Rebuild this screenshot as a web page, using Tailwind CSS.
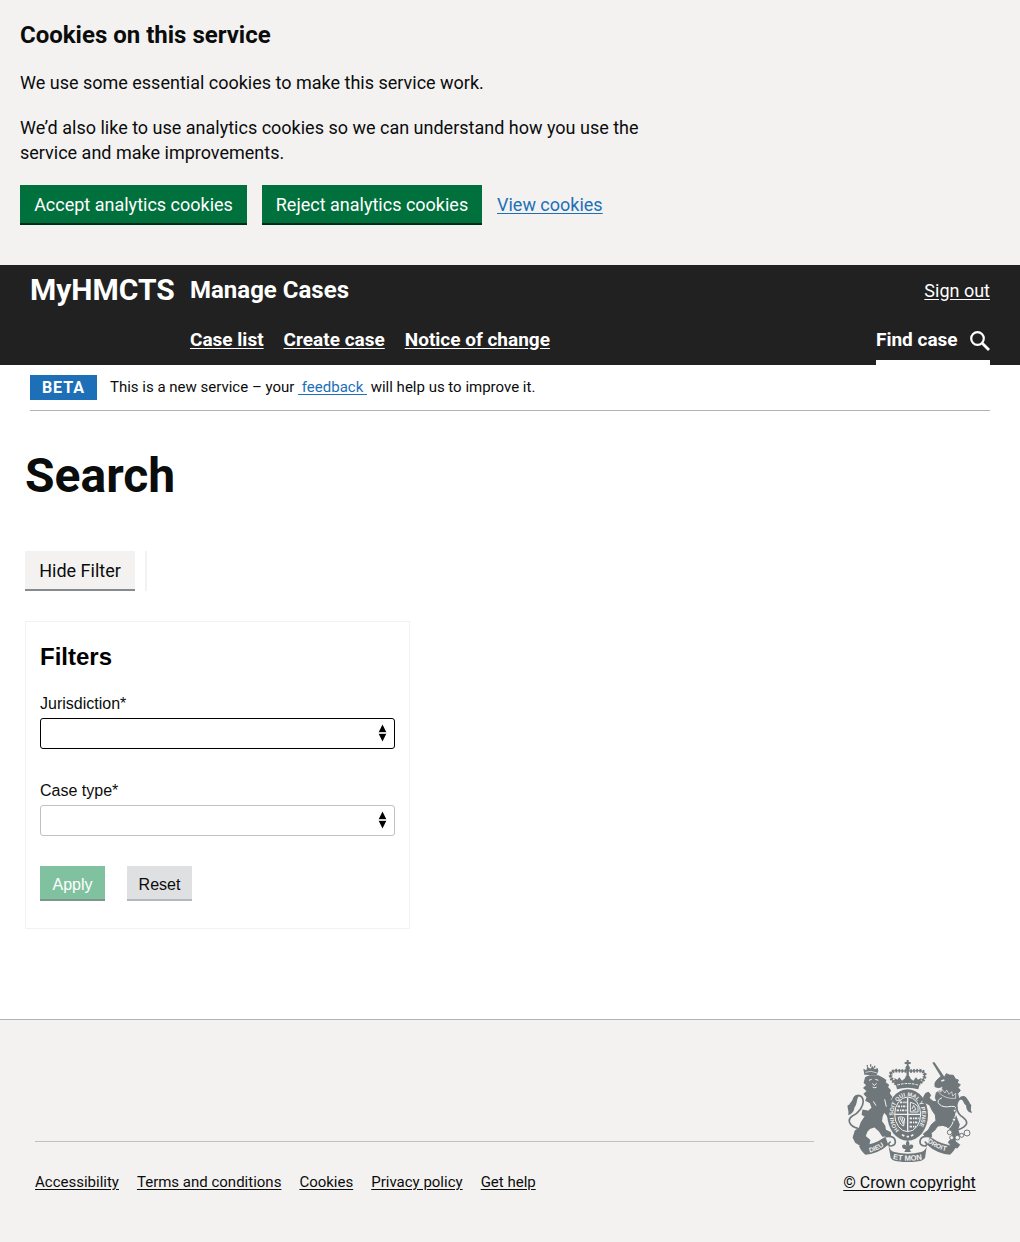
<!DOCTYPE html>
<html lang="en">
<head>
<meta charset="utf-8">
<meta name="viewport" content="width=device-width, initial-scale=1">
<title>Search - Manage Cases</title>
<script src="https://cdn.jsdelivr.net/npm/@tailwindcss/browser@4"></script>
</head>
<body class="flex min-h-screen flex-col bg-white font-['Roboto','Noto_Sans',sans-serif] text-[18px] leading-[25px] text-[#0b0c0c]">

<section aria-label="Cookies on this service" class="bg-[#f3f2f1] px-5 pt-5 pb-10">
  <div class="max-w-[640px]">
    <h2 class="mb-5 text-[24px] leading-[30px] font-bold">Cookies on this service</h2>
    <p class="mb-5">We use some essential cookies to make this service work.</p>
    <p class="mb-5">We’d also like to use analytics cookies so we can understand how you use the service and make improvements.</p>
  </div>
  <div class="flex flex-wrap items-center gap-[15px]">
    <button type="button" class="h-10 w-[227px] border-b-2 border-[#002d18] bg-[#00703c] text-white">Accept analytics cookies</button>
    <button type="button" class="h-10 w-[220px] border-b-2 border-[#002d18] bg-[#00703c] text-white">Reject analytics cookies</button>
    <a href="#" class="pb-[2px] text-[#1d70b8] underline underline-offset-2">View cookies</a>
  </div>
</section>

<header class="bg-[#212121] px-[30px] text-white">
  <div class="flex h-[50px] items-center">
    <a href="#" class="w-40 text-[30px] leading-[30px] font-bold">MyHMCTS</a>
    <a href="#" class="text-[24px] leading-[30px] font-bold">Manage Cases</a>
    <a href="#" class="ml-auto underline underline-offset-2">Sign out</a>
  </div>
  <nav aria-label="Primary" class="flex h-[50px] items-stretch justify-between pl-40 text-[19px] font-bold">
    <ul class="flex items-center gap-5 pb-[2px]">
      <li><a href="#" class="underline underline-offset-2">Case list</a></li>
      <li><a href="#" class="underline underline-offset-2">Create case</a></li>
      <li><a href="#" class="underline underline-offset-2">Notice of change</a></li>
    </ul>
    <a href="#" class="flex w-[114px] items-center justify-between border-b-5 border-white pt-[3px]">Find case
      <svg class="mt-1 size-5" viewBox="0 0 20 20" fill="none" stroke="currentColor" aria-hidden="true"><circle cx="7.5" cy="7.500" r="6.3" stroke-width="2.2"/><path d="M12 12l7 7" stroke-width="2.8"/></svg>
    </a>
  </nav>
</header>

<main class="grow">
  <div class="mx-[30px] flex items-center gap-[13px] border-b border-[#b1b4b6] py-[10px] text-[15px]">
    <strong class="w-[67px] bg-[#1d70b8] text-center text-[16px] tracking-[1px] text-white">BETA</strong>
    <span>This is a new service – your <a href="#" class="whitespace-pre text-[#1d70b8] underline underline-offset-2"> feedback </a> will help us to improve it.</span>
  </div>

  <div class="px-[25px] pt-10 pb-[90px]">
    <h1 class="mb-[50px] text-[48px] leading-[50px] font-bold">Search</h1>
    <div class="mb-[30px] flex gap-[10px]">
      <button type="button" class="h-10 w-[110px] border-b-2 border-[#858b8e] bg-[#f3f2f1]">Hide Filter</button>
      <span class="w-[2px] bg-[#f3f2f1]"></span>
    </div>

    <form class="w-full max-w-[385px] border border-[#f3f2f1] px-[14px] pt-5 pb-[27px] font-['Liberation_Sans',Arial,sans-serif] text-[16px] leading-5">
      <h2 class="mb-5 text-[24px] leading-[30px] font-bold text-black">Filters</h2>
      <label for="jurisdiction" class="mb-1 block pt-[2px]">Jurisdiction*</label>
      <div class="relative mb-[30px]">
        <select id="jurisdiction" class="block h-[31px] w-full appearance-none rounded-[3px] border border-black bg-white px-2"><option></option></select>
        <svg class="pointer-events-none absolute top-[6px] right-2 h-[18px] w-[9px]" viewBox="0 0 9 18" aria-hidden="true"><path d="M4.500.5L8.200 8H.8zM4.500 17.500L8.200 10H.8z"/><path d="M.5 9h8" stroke="#aaa" stroke-width="1"/></svg>
      </div>
      <label for="case-type" class="mb-1 block pt-[2px]">Case type*</label>
      <div class="relative mb-[30px]">
        <select id="case-type" class="block h-[31px] w-full appearance-none rounded-[3px] border border-[#bfc1c3] bg-white px-2"><option></option></select>
        <svg class="pointer-events-none absolute top-[6px] right-2 h-[18px] w-[9px]" viewBox="0 0 9 18" aria-hidden="true"><path d="M4.500.5L8.200 8H.8zM4.500 17.500L8.200 10H.8z"/><path d="M.5 9h8" stroke="#aaa" stroke-width="1"/></svg>
      </div>
      <div class="flex gap-[22px]">
        <button type="button" disabled class="h-[35px] w-[65px] border-b-2 border-[#7e9689] bg-[#80c29f] pt-1 text-white">Apply</button>
        <button type="button" class="h-[35px] w-[65px] border-b-2 border-[#b1b8be] bg-[#dee0e2] pt-1">Reset</button>
      </div>
    </form>
  </div>
</main>

<footer class="flex items-end gap-[30px] border-t border-[#b1b4b6] bg-[#f3f2f1] pt-10 pr-[45px] pb-[47px] pl-[35px] text-[15px]">
  <ul class="flex grow flex-wrap gap-x-[18px] border-t border-[#bfc1c3] pt-7">
    <li><a href="#" class="underline underline-offset-2">Accessibility</a></li>
    <li><a href="#" class="underline underline-offset-2">Terms and conditions</a></li>
    <li><a href="#" class="underline underline-offset-2">Cookies</a></li>
    <li><a href="#" class="underline underline-offset-2">Privacy policy</a></li>
    <li><a href="#" class="underline underline-offset-2">Get help</a></li>
  </ul>
  <a href="#" class="flex w-[131px] shrink-0 flex-col items-center gap-2 text-[16px] whitespace-nowrap underline underline-offset-2">
    <svg class="h-[102px] w-[125px]" viewBox="36 30 375 306" fill="#6f777b" aria-hidden="true">
      <!-- lion -->
      <path d="M88 74L85 56L94 61L97 50L106 56L113 48L119 58L128 54L130 63L125 76Z"/>
      <path d="M97 50v-5M107 43v7M119 47v6" stroke="#6f777b" stroke-width="4"/>
      <path d="M91 67q17-7 35 2" fill="none" stroke="#f3f2f1" stroke-width="2"/>
      <path stroke="#6f777b" stroke-width="4" d="M92 83L104 78L130 78L142 84L152 91L150 98L160 105L157 112L166 121L162 130L170 141L165 150L171 160L169 174L160 182L168 190L178 197L177 207L163 209L156 195L147 185L141 199L139 214L149 228L151 240L166 248L166 256L143 258L134 244L119 230L104 235L95 245L90 259L104 271L101 284L80 288L62 277L55 262L61 243L73 235L79 218L91 199L82 193L84 181L101 184L112 173L106 158L93 151L97 141L88 132L97 123L87 114L96 105L88 98Z"/>
      <path d="M102 91l8-3M121 88l9 3M112 101l6 5l7-6M113 111q7 5 12 0M115 154l8 13M149 148l5 22" fill="none" stroke="#f3f2f1" stroke-width="3"/>
      <path d="M69 235C43 230 35 209 52 198C70 190 88 168 84 149C81 135 65 132 58 146C54 159 43 157 43 173" fill="none" stroke="#6f777b" stroke-width="5"/>
      <path d="M52 151C56 136 64 132 74 135C63 145 69 159 58 173C58 184 49 193 39 195C44 185 36 177 38 165L48 164Z"/>
      <!-- unicorn -->
      <path d="M292 38L298 36L328 80L320 84Z"/>
      <path stroke="#6f777b" stroke-width="3" d="M305 91L317 80L328 82L334 71L343 75L355 76L361 87L370 90L367 99L376 104L369 113L376 121L368 131L372 147L363 160L367 180L360 191L367 209L373 224L368 239L374 255L363 263L360 274L374 284L367 294L350 290L340 277L351 263L352 246L339 233L324 226L308 228L299 241L288 249L290 260L273 262L265 252L280 240L289 224L303 212L301 195L291 180L284 165L271 158L265 143L272 130L281 127L287 136L282 144L294 154L306 155L301 143L304 128L320 119L326 108L311 113L300 110L300 99Z"/>
      <path d="M319 93l9-3M316 119q18 23 46 20" fill="none" stroke="#f3f2f1" stroke-width="4"/>
      <path d="M310 121l8 5l2-9l10 12l5-9l7 13l8-8l3 13l9-8v15q-32 3-51-18z" fill="#6f777b" stroke="#f3f2f1" stroke-width="2"/>
      <path d="M321 143Q302 152 313 163T349 169T358 207T332 230" fill="none" stroke="#f3f2f1" stroke-width="3"/>
      <path d="M366 241C405 226 398 213 384 202C363 190 361 163 371 150C380 139 389 142 397 151C402 160 407 164 405 177" fill="none" stroke="#6f777b" stroke-width="5"/>
      <path d="M370 149C380 130 397 139 397 152L409 166L407 178L411 189C396 187 394 176 393 166C382 158 388 146 370 149Z"/>
      <g fill="#f3f2f1" stroke="#6f777b" stroke-width="3"><circle cx="344" cy="247" r="7"/><circle cx="350" cy="263" r="6"/><circle cx="367" cy="263" r="7"/><circle cx="380" cy="256" r="6"/><circle cx="396" cy="249" r="9"/><circle cx="357" cy="209" r="5"/><circle cx="359" cy="182" r="4"/></g>
      <!-- royal crown -->
      <path d="M215 30h6v6h6v6h-6v8h-6v-8h-6v-6h6z"/>
      <circle cx="218" cy="54" r="7"/>
      <g fill="none" stroke="#6f777b">
        <path d="M184 102C158 82 164 62 184 62C201 62 211 65 218 61C225 65 235 62 252 62C272 62 278 82 252 102" stroke-width="11" stroke-dasharray="5 4"/>
        <path d="M184 102C158 82 164 62 184 62C201 62 211 65 218 61C225 65 235 62 252 62C272 62 278 82 252 102" stroke-width="4"/>
        <path d="M218 58v35" stroke-width="7"/>
      </g>
      <path d="M181 98L178 84L187 89L193 82L201 92L210 85L213 77L223 77L227 86L235 92L243 82L249 89L259 84L255 100L250 118Q218 108 186 118Z"/>
      <path d="M187 105Q218 96 249 105" fill="none" stroke="#f3f2f1" stroke-width="3" stroke-dasharray="8 3"/>
      <!-- garter and shield -->
      <ellipse cx="218" cy="195" rx="61" ry="77"/>
      <ellipse cx="218" cy="193" rx="39" ry="52" stroke="#f3f2f1" stroke-width="3"/>
      <path d="M218 143v101M179 193h78" stroke="#f3f2f1" stroke-width="4"/>
      <g fill="none" stroke="#f3f2f1" stroke-width="5" stroke-dasharray="7 3 4 2">
        <path d="M195 157h20M188 169h27M185 181h30M224 205h29M224 217h26M224 230h19"/>
      </g>
      <path d="M226 186v-29q14 2 23 13v16zM231 177l5-11l7 13l-10 3" fill="none" stroke="#f3f2f1" stroke-width="3"/>
      <path d="M190 202q10-4 19 3l-3 23q-14-5-16-26M195 204l10 19M201 204l5 14" fill="none" stroke="#f3f2f1" stroke-width="3"/>
      <path id="garter" d="M193 240A43 56 0 1 1 243 240" fill="none"/>
      <text fill="#f3f2f1" font-family="Liberation Sans" font-size="17" font-weight="bold"><textPath href="#garter">HONI SOIT QUI MAL Y PENSE</textPath></text>
      <path d="M201 254l7 4M215 260h7M228 258l7-4" stroke="#f3f2f1" stroke-width="5"/>
      <!-- motto ribbon -->
      <path d="M72 288Q115 286 151 260L160 284Q130 311 91 314Q80 306 72 288Z"/>
      <path d="M364 288Q321 286 285 260L276 284Q306 311 345 314Q356 306 364 288Z"/>
      <path d="M151 260q30-5 30 16q0 12-17 12q-7-8 3-13" fill="#f3f2f1" stroke="#6f777b" stroke-width="5"/>
      <path d="M285 260q-30-5-30 16q0 12 17 12q7-8-3-13" fill="#f3f2f1" stroke="#6f777b" stroke-width="5"/>
      <path d="M160 284Q164 302 178 306Q218 317 259 306Q274 301 276 284L270 324Q264 331 256 333Q218 340 181 333Q171 331 167 323Z"/>
      <path d="M218 271q-9 8-3 19q-3-9-13-5q-3 9 6 12h4l-4 9h20l-4-9h4q9-3 6-12q-10-4-13 5q6-11-3-19z"/>
      <path id="dieu" d="M104 307Q132 302 158 279" fill="none"/>
      <path id="droit" d="M277 276Q304 299 345 305" fill="none"/>
      <path id="mon" d="M173 327Q218 337 266 327" fill="none"/>
      <g fill="#f3f2f1" font-family="Liberation Sans" font-size="20" font-weight="bold">
        <text><textPath href="#dieu">DIEU</textPath></text>
        <text><textPath href="#droit">DROIT</textPath></text>
        <text font-size="23"><textPath href="#mon">ET MON</textPath></text>
      </g>
    </svg>
    <span>© Crown copyright</span>
  </a>
</footer>
</body>
</html>
